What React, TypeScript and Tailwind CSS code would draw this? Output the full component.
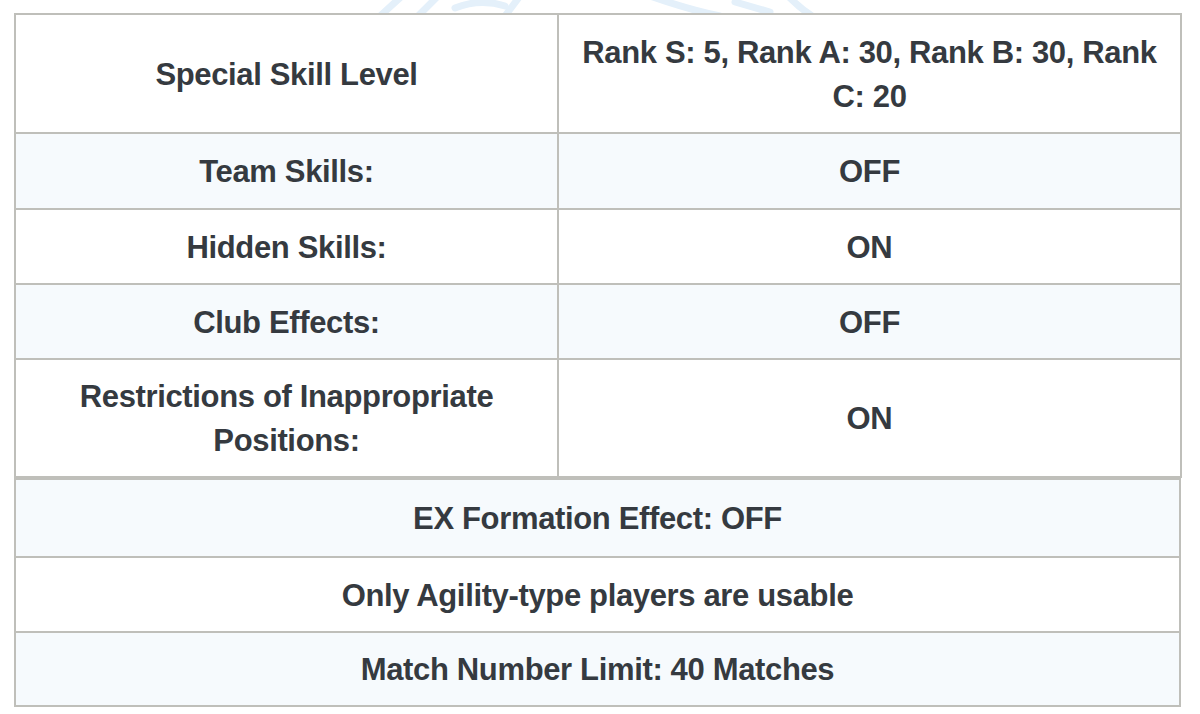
import React from 'react';

const font = { fontFamily: '"Liberation Sans", Arial, Helvetica, sans-serif' };

type Row = { label?: string; value: string; height: string; tint: boolean };

const topRows: Row[] = [
  { label: 'Special Skill Level', value: 'Rank S: 5, Rank A: 30, Rank B: 30, Rank C: 20', height: 'h-[117px]', tint: false },
  { label: 'Team Skills:', value: 'OFF', height: 'h-[74px]', tint: true },
  { label: 'Hidden Skills:', value: 'ON', height: 'h-[73px]', tint: false },
  { label: 'Club Effects:', value: 'OFF', height: 'h-[73px]', tint: true },
  { label: 'Restrictions of Inappropriate Positions:', value: 'ON', height: 'h-[116px]', tint: false },
];

// heights include the 2px top border (border-box)
const bottomRows: Row[] = [
  { value: 'EX Formation Effect: OFF', height: 'h-[76px]', tint: true },
  { value: 'Only Agility-type players are usable', height: 'h-[75px]', tint: false },
  { value: 'Match Number Limit: 40 Matches', height: 'h-[74px]', tint: true },
];

function Watermark() {
  return (
    <svg className="absolute left-0 top-0" width="1200" height="16" viewBox="0 0 1200 16">
      <g fill="none" stroke="#e4f0fa" strokeWidth="7" strokeLinecap="round">
        <path d="M380 16 L402 -4" />
        <path d="M418 16 L440 -6" />
        <path d="M455 8 Q480 -2 505 6" />
        <path d="M505 16 L520 -4" />
        <path d="M650 -4 Q690 10 720 16" />
        <path d="M735 2 L770 12" />
        <path d="M790 -2 Q800 8 812 16" />
      </g>
    </svg>
  );
}

export default function App() {
  return (
    <div className="relative w-[1200px] h-[714px] bg-white overflow-hidden" style={font}>
      <Watermark />
      <div className="relative pl-[14px] pt-[13px] text-[31px] font-bold tracking-[-0.35px] leading-[44px] text-[#353a40]">
        <div className="w-[1168px] border-2 border-[#bfbfba]">
          {topRows.map((row, i) => (
            <div
              key={row.value + i}
              className={`grid grid-cols-[541px_1fr] ${i > 0 ? 'border-t-2 border-[#bfbfba]' : ''} ${row.tint ? 'bg-[#f6fafd]' : 'bg-white'}`}
            >
              <div className={`${row.height} flex items-center justify-center text-center px-[30px] pt-[2px]`}>
                {row.label}
              </div>
              <div className={`${row.height} flex items-center justify-center text-center px-[10px] pt-[2px] border-l-2 border-[#bfbfba]`}>
                {row.value}
              </div>
            </div>
          ))}
        </div>
        <div className="w-[1167px] border-2 border-[#bfbfba]">
          {bottomRows.map((row, i) => (
            <div
              key={row.value}
              className={`${row.height} flex items-center justify-center text-center pt-[2px] ${i > 0 ? 'border-t-2 border-[#bfbfba]' : ''} ${row.tint ? 'bg-[#f6fafd]' : 'bg-white'}`}
            >
              {row.value}
            </div>
          ))}
        </div>
      </div>
    </div>
  );
}
